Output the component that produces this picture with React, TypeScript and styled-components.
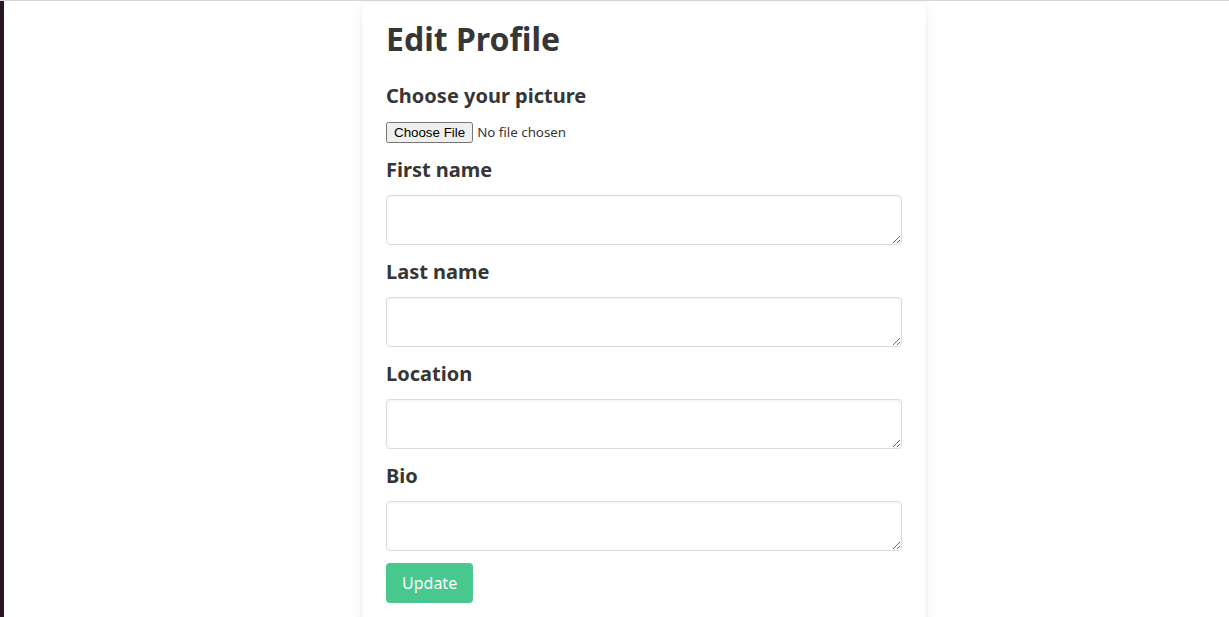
import React from "react";
import styled, { createGlobalStyle } from "styled-components";

const Global = createGlobalStyle`
  html, body { margin: 0; padding: 0; background: #fff; }
  body { font-family: "Noto Sans", "Open Sans", sans-serif; color: #363636; }
  * { box-sizing: border-box; }
`;

const Screen = styled.div`
  display: flex;
  min-height: 617px;
  border-top: 1px solid #d6d6d6;
`;

const SideStrip = styled.div`
  width: 4px;
  flex: none;
  background: #2a1626;
`;

const Main = styled.div`
  flex: 1;
  display: flex;
  justify-content: center;
`;

const Card = styled.div`
  width: 564px;
  margin-top: 1px;
  margin-left: 55px;
  padding: 19px 24px 24px;
  background: #fff;
  box-shadow: 0 0.5em 1em -0.125em rgba(10, 10, 10, 0.1), 0 0 0 1px rgba(10, 10, 10, 0.02);
`;

const Title = styled.h1`
  margin: 0 0 24px;
  font-size: 32px;
  font-weight: 700;
  line-height: 1.125;
`;

const Form = styled.form`
  display: flex;
  flex-direction: column;
`;

const Field = styled.div`
  display: flex;
  flex-direction: column;
  margin-bottom: 12px;
`;

const Label = styled.label<{ $tight?: boolean }>`
  font-size: 20px;
  font-weight: 700;
  line-height: 30px;
  margin-bottom: ${(p) => (p.$tight ? 11 : 10)}px;
`;

const FileInput = styled.input`
  font-family: "Noto Sans", sans-serif;
  font-size: 13.333px;
  color: #363636;
  margin: 0;
  &::file-selector-button {
    font-family: "Liberation Sans", Arial, sans-serif;
    font-size: 13.333px;
  }
`;

const TextArea = styled.textarea`
  width: 516px;
  height: 50px;
  border: 1px solid #dbdbdb;
  border-radius: 4px;
  box-shadow: inset 0 0.0625em 0.125em rgba(10, 10, 10, 0.05);
  font-family: inherit;
  font-size: 16px;
  padding: 8px 10px;
  resize: vertical;
  display: block;
`;

const Button = styled.button`
  align-self: flex-start;
  height: 40px;
  padding: 0 16px;
  border: none;
  border-radius: 4px;
  background: #48c78e;
  color: #fff;
  font-family: inherit;
  font-size: 16px;
  cursor: pointer;
`;

const fields = ["First name", "Last name", "Location", "Bio"];

export default function App() {
  return (
    <>
      <Global />
      <Screen>
        <SideStrip />
        <Main>
          <Card>
            <Title>Edit Profile</Title>
            <Form onSubmit={(e) => e.preventDefault()}>
              <Field>
                <Label $tight>Choose your picture</Label>
                <FileInput type="file" />
              </Field>
              {fields.map((f) => (
                <Field key={f}>
                  <Label>{f}</Label>
                  <TextArea />
                </Field>
              ))}
              <Button type="submit">Update</Button>
            </Form>
          </Card>
        </Main>
      </Screen>
    </>
  );
}
